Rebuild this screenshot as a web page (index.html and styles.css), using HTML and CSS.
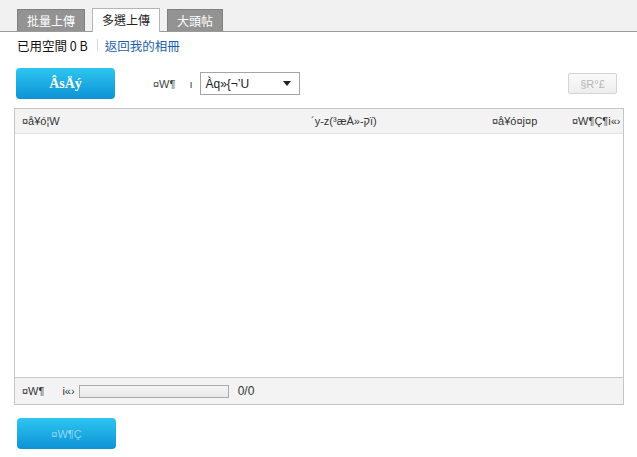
FILE: index.html
```html
<!DOCTYPE html>
<html>
<head>
<meta charset="utf-8">
<link rel="stylesheet" href="styles.css">
</head>
<body>
<div class="tabs">
  <div class="tab">批量上傳</div>
  <div class="tab active">多選上傳</div>
  <div class="tab">大頭帖</div>
</div>
<div class="info">
  <span class="used">已用空間 0 B</span>
  <span class="sep"></span>
  <a class="back">返回我的相冊</a>
</div>
<div class="toolbar">
  <div class="btn browse">ÂsÄý</div>
  <span class="lbl">¤W¶</span>
  <span class="lbl2">ı</span>
  <div class="select"><span>Àq»{¬’U</span><span class="arrow"></span></div>
  <div class="spacer"></div>
  <div class="del">§R°£</div>
</div>
<div class="table">
  <div class="thead">
    <span class="c1">¤å¥ó¦W</span>
    <span class="c2">´y-z(³æÀ»-קï)</span>
    <span class="c3">¤å¥ó¤j¤p</span>
    <span class="c4">¤W¶Ç¶i«›</span>
  </div>
  <div class="tbody"></div>
  <div class="tfoot">
    <span class="f1">¤W¶</span>
    <span class="f2">i«›</span>
    <div class="bar"></div>
    <span class="count">0/0</span>
  </div>
</div>
<div class="bottom">
  <div class="btn start">¤W¶Ç</div>
</div>
</body>
</html>
```
FILE: styles.css
```css
* { box-sizing: border-box; }
body {
  margin: 0;
  background: #fff;
  font-family: "Liberation Sans", Arial, "Noto Sans CJK TC", sans-serif;
  font-size: 12px;
  color: #333;
  width: 637px;
  height: 457px;
  overflow: hidden;
}
.tabs {
  display: flex;
  align-items: flex-end;
  gap: 7px;
  height: 32px;
  padding-left: 17px;
  background: #f1f1f1;
  border-bottom: 1px solid #9a9a9a;
}
.tab {
  height: 22px;
  padding: 0 9px;
  background: #939393;
  border: 1px solid #7f7f7f;
  border-bottom: none;
  color: #fff;
  font-family: "Noto Sans CJK TC", sans-serif;
  font-size: 12px;
  line-height: 21px;
  white-space: nowrap;
}
.tab.active {
  background: #fff;
  color: #222;
  border-color: #b5b5b5;
  height: 24px;
  margin-bottom: -1px;
  line-height: 22px;
}
.info {
  display: flex;
  align-items: center;
  height: 26px;
  padding-left: 17px;
  font-family: "Noto Sans CJK TC", sans-serif;
  font-size: 12.5px;
  white-space: nowrap;
}
.used { color: #111; }
.sep {
  width: 1px;
  height: 12px;
  background: #d8d8d8;
  margin: 0 7px 0 9px;
}
.back { color: #1c5fa8; }
.toolbar {
  display: flex;
  align-items: center;
  height: 31px;
  margin-top: 10px;
  padding-left: 16px;
  padding-right: 20px;
  white-space: nowrap;
}
.btn {
  width: 99px;
  height: 31px;
  border-radius: 4px;
  background: linear-gradient(#2ec6f0, #0d92d6);
  display: flex;
  align-items: center;
  justify-content: center;
  color: #fff;
}
.browse {
  font-family: "Liberation Serif", serif;
  font-weight: bold;
  font-size: 14px;
}
.lbl {
  margin-left: 38px;
  font-size: 11px;
  color: #444;
}
.lbl2 {
  margin-left: 14px;
  font-size: 11px;
  color: #444;
}
.select {
  margin-left: 8px;
  width: 100px;
  height: 23px;
  border: 1px solid #a5a5a5;
  display: flex;
  align-items: center;
  justify-content: space-between;
  padding: 0 8px 0 4px;
  font-size: 12px;
  color: #222;
}
.arrow {
  width: 0;
  height: 0;
  border-left: 4px solid transparent;
  border-right: 4px solid transparent;
  border-top: 5px solid #222;
}
.spacer { flex: 1; }
.del {
  width: 49px;
  height: 21px;
  border: 1px solid #d4d4d4;
  border-radius: 2px;
  background: linear-gradient(#fafafa, #ededed);
  color: #b5b5b5;
  font-size: 11px;
  display: flex;
  align-items: center;
  justify-content: center;
}
.table {
  margin: 9px 13px 0 14px;
  height: 297px;
  border: 1px solid #c6c6c6;
  display: flex;
  flex-direction: column;
}
.thead {
  height: 25px;
  background: #f3f3f3;
  border-bottom: 1px solid #e2e2e2;
  display: flex;
  align-items: center;
  font-size: 11px;
  color: #333;
  white-space: nowrap;
}
.thead span { flex: none; }
.thead .c1 { width: 296px; padding-left: 7px; }
.thead .c2 { width: 181px; }
.thead .c3 { width: 80px; }
.tbody { flex: 1; background: #fff; }
.tfoot {
  height: 27px;
  background: #f3f3f3;
  border-top: 1px solid #c9c9c9;
  display: flex;
  align-items: center;
  font-size: 11px;
  color: #333;
  white-space: nowrap;
}
.f1 { margin-left: 7px; }
.f2 { margin-left: 18px; }
.bar {
  margin-left: 4px;
  width: 150px;
  height: 13px;
  border: 1px solid #a9a9a9;
  background: linear-gradient(#f5f5f5, #e8e8e8);
}
.count { margin-left: 9px; font-size: 12px; }
.bottom {
  padding: 13px 0 0 17px;
}
.start {
  color: #8fd6f3;
  font-size: 11px;
}
```
